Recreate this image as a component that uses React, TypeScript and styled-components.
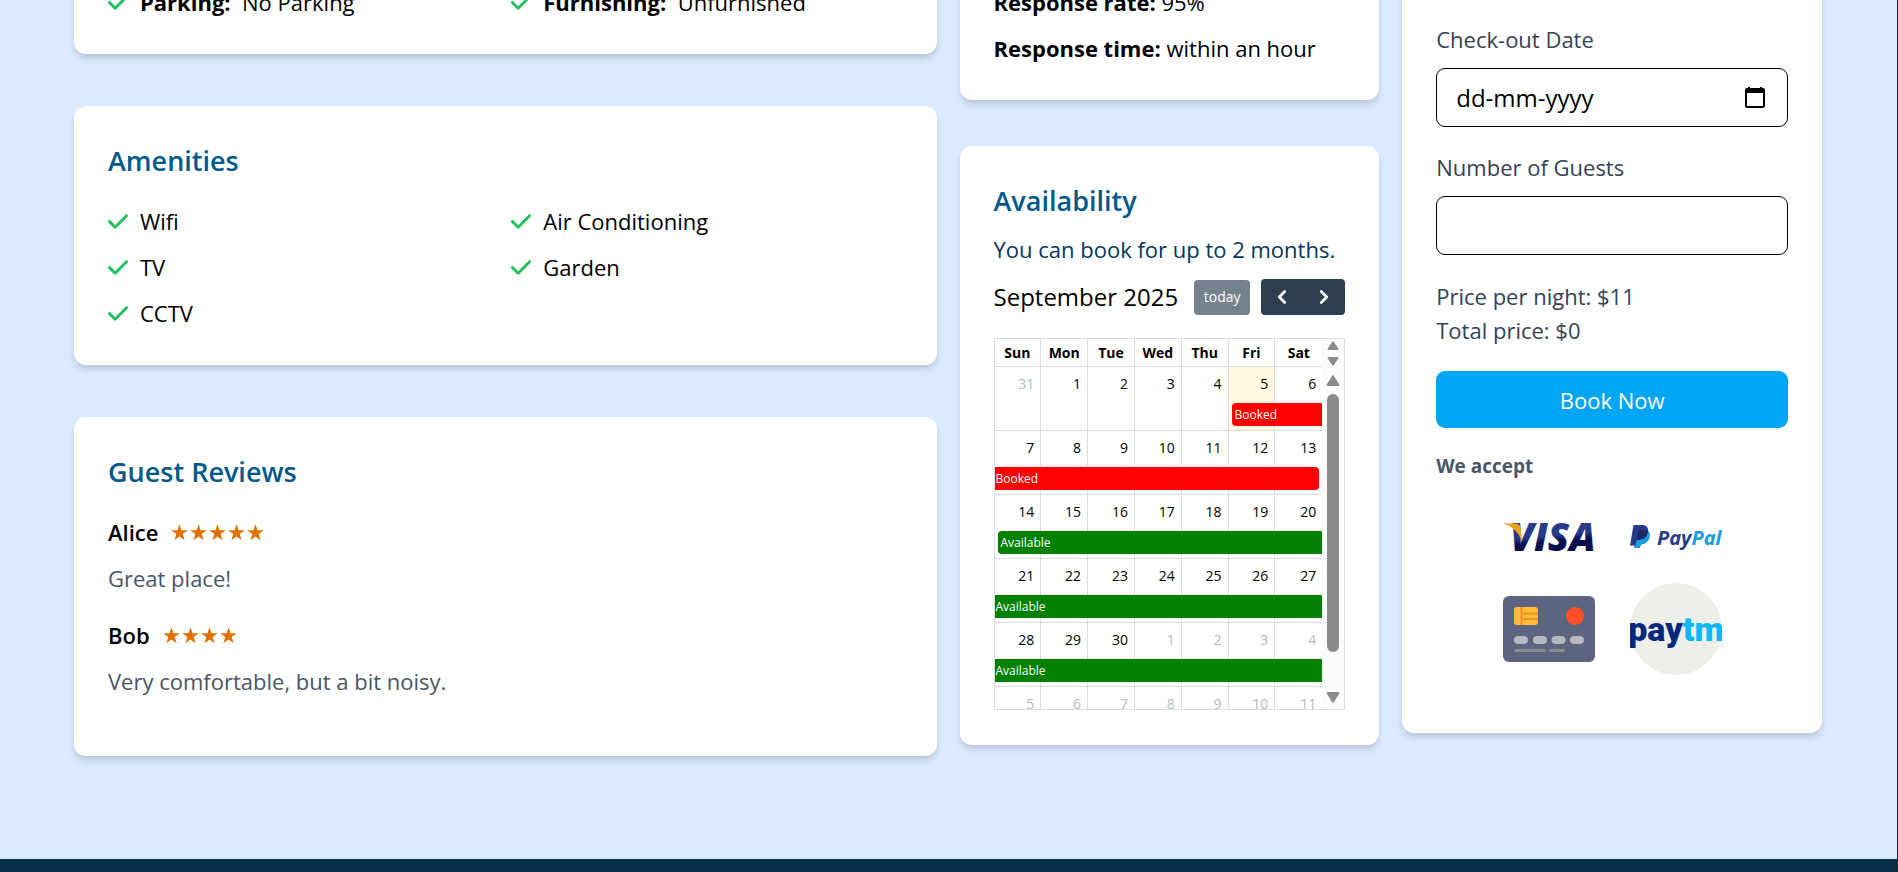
import React from 'react';
import styled, { createGlobalStyle, css } from 'styled-components';
import { FaCheck } from 'react-icons/fa6';
import { ChevronLeft, ChevronRight } from 'lucide-react';

const GlobalStyle = createGlobalStyle`
  *, *::before, *::after { box-sizing: border-box; }
  body {
    margin: 0;
    font-family: "Open Sans", "Noto Sans", sans-serif;
    font-size: 22px;
    line-height: 34px;
    color: #000;
  }
  h2, p, ul { margin: 0; padding: 0; }
  button, input { font: inherit; }
`;

const Page = styled.div`
  min-height: 100vh;
  display: flex;
  flex-direction: column;
  overflow: hidden;
  background: #dbeafe;
  border-right: 1px solid #23262b;
`;

/* The top row of cards runs on above the visible part of the page. */
const Main = styled.main`
  display: grid;
  grid-template-columns: repeat(4, minmax(0, 1fr));
  gap: 23px;
  align-items: start;
  margin-top: -50px;
  padding: 0 75px 103px 74px;
`;

const Column = styled.div<{ $span?: number; $gap: number }>`
  grid-column: span ${(p) => p.$span ?? 1};
  display: flex;
  flex-direction: column;
  gap: ${(p) => p.$gap}px;
`;

const Card = styled.section<{ $top?: number }>`
  padding: ${(p) => p.$top ?? 35}px 34px 35px;
  border-radius: 12px;
  background: #fff;
  box-shadow: 0 6px 9px -1px rgba(0, 0, 0, 0.1), 0 3px 6px -2px rgba(0, 0, 0, 0.1);
`;

const Heading = styled.h2<{ $gap?: number }>`
  margin-bottom: ${(p) => p.$gap ?? 23}px;
  font-size: 27px;
  line-height: 40px;
  font-weight: 600;
  color: #00598a;
`;

const CheckGrid = styled.ul`
  display: grid;
  grid-template-columns: 1fr 1fr;
  gap: 12px;
  list-style: none;
`;

const CheckItem = styled.li`
  display: flex;
  align-items: center;
  gap: 12px;
  svg { width: 20px; height: 23px; color: #1fbf5a; }
`;

const FactList = styled.div`
  display: grid;
  gap: 12px;
`;

const Review = styled.article`
  display: grid;
  gap: 12px;
  margin-bottom: 23px;
`;

const Reviewer = styled.div`
  display: flex;
  align-items: center;
  gap: 12px;
  font-weight: 600;
`;

const Stars = styled.span`
  display: flex;
  color: #e17100;
  svg { width: 19px; height: 19px; }
`;

const Comment = styled.p`
  color: #4a5565;
`;

const Note = styled.p`
  color: #05365a;
`;

const Toolbar = styled.div`
  display: flex;
  align-items: center;
  gap: 11px;
  margin: 13px 0 23px;
`;

const Month = styled.span`
  flex: 1;
  font-size: 24px;
  line-height: 36px;
  white-space: nowrap;
`;

const TodayButton = styled.button`
  width: 56px;
  height: 35px;
  padding: 0;
  border: 0;
  border-radius: 4px;
  background: #75818d;
  color: #fff;
  font-size: 14px;
  line-height: 20px;
`;

const NavGroup = styled.div`
  display: flex;
  border-radius: 4px;
  overflow: hidden;
`;

const NavButton = styled.button`
  display: flex;
  align-items: center;
  justify-content: center;
  width: 42px;
  height: 36px;
  padding: 0;
  border: 0;
  background: #2c3e50;
  color: #fff;
`;

const Calendar = styled.div`
  display: flex;
  height: 372px;
  border: 1px solid #ddd;
  overflow: hidden;
`;

const TableArea = styled.div`
  flex: 1;
  min-width: 0;
`;

const MonthTable = styled.table`
  width: 100%;
  table-layout: fixed;
  border-collapse: separate;
  border-spacing: 0;
  font-size: 14px;
  line-height: 20px;
  th, td {
    border: solid #ddd;
    border-width: 0 1px 1px 0;
    padding: 0;
  }
  th:last-child, td:last-child { border-right: 0; }
  th { height: 28px; font-weight: 700; }
`;

const Day = styled.td<{ $muted?: boolean; $today?: boolean }>`
  position: relative;
  height: 64px;
  text-align: right;
  vertical-align: top;
  color: ${(p) => (p.$muted ? '#b5b9c1' : '#000')};
  background: ${(p) => (p.$today ? '#fffadf' : 'transparent')};
`;

const DayNumber = styled.div`
  padding: 7px 6px 0 0;
`;

const EventBar = styled.div<{ $days: number; $kind: string; $start: boolean; $end: boolean }>`
  position: absolute;
  z-index: 1;
  top: 36px;
  left: ${(p) => (p.$start ? 3 : 0)}px;
  width: calc(${(p) => p.$days * 100}% + ${(p) => p.$days}px - ${(p) => (p.$start ? 3 : 0) + (p.$end ? 3 : 0)}px);
  height: 23px;
  padding-left: ${(p) => (p.$start ? 3 : 1)}px;
  background: ${(p) => (p.$kind === 'Booked' ? '#f00' : '#008000')};
  color: #fff;
  font-size: 12px;
  line-height: 23px;
  text-align: left;
  ${(p) => p.$start && css`border-top-left-radius: 4px; border-bottom-left-radius: 4px;`}
  ${(p) => p.$end && css`border-top-right-radius: 4px; border-bottom-right-radius: 4px;`}
`;

const Gutter = styled.div`
  position: relative;
  z-index: 2;
  display: flex;
  flex-direction: column;
  align-items: center;
  width: 22px;
  background: #fcfcfc;
  color: #8b8b8d;
  svg { display: block; }
`;

const GutterHead = styled.div`
  display: flex;
  flex-direction: column;
  justify-content: space-between;
  height: 28px;
  padding: 2px 0 1px;
`;

const GutterBody = styled.div`
  flex: 1;
  display: flex;
  flex-direction: column;
  align-items: center;
  gap: 8px;
  padding: 8px 0 6px;
`;

const Track = styled.div`
  flex: 1;
  width: 12px;
`;

const Thumb = styled.div`
  height: 89%;
  border-radius: 6px;
  background: #8b8b8d;
`;

const BookingForm = styled.form`
  display: grid;
  grid-template-columns: minmax(0, 1fr);
  gap: 23px;
`;

const Field = styled.label`
  display: grid;
  grid-template-columns: minmax(0, 1fr);
  gap: 12px;
  color: #364153;
`;

const InputBox = styled.span`
  display: flex;
  align-items: center;
  height: 59px;
  padding: 0 22px 0 19px;
  border: 1px solid #000;
  border-radius: 9px;
  background: #fff;
`;

const Input = styled.input`
  flex: 1;
  min-width: 0;
  padding: 0;
  border: 0;
  outline: 0;
  background: transparent;
  color: #000;
  font-size: 24px;
  &::placeholder { color: #000; opacity: 1; }
`;

const Prices = styled.div`
  padding: 1px 0;
  color: #364153;
`;

const BookButton = styled.button`
  height: 57px;
  border: 0;
  border-radius: 9px;
  background: #00a6f4;
  color: #fff;
`;

const Accept = styled.p`
  margin-top: 23px;
  font-size: 19px;
  line-height: 30px;
  font-weight: 700;
  color: #4a5565;
`;

const Payments = styled.div`
  display: grid;
  grid-template-columns: 92px 92px;
  justify-content: center;
  column-gap: 35px;
  padding: 10px 0 23px;
  svg { display: block; width: 92px; height: 92px; }
`;

const Footer = styled.footer`
  flex: 1;
  min-height: 13px;
  background: #052f4a;
`;

const Triangle = ({ down, size = 14 }: { down?: boolean; size?: number }) => (
  <svg width={size} height={size === 14 ? 11 : 9} viewBox="0 0 14 11" preserveAspectRatio="none" aria-hidden="true">
    <path
      d={down ? 'M1.6 1H12.4L7 9.6Z' : 'M1.6 10H12.4L7 1.4Z'}
      fill="currentColor"
      stroke="currentColor"
      strokeWidth="2"
      strokeLinejoin="round"
    />
  </svg>
);

const Star = () => (
  <svg viewBox="0 0 19 19" aria-hidden="true">
    <path fill="currentColor" d="M9.5 1.2 11.5 7.3H17.8L12.7 11.1 14.6 17.2 9.5 13.4 4.4 17.2 6.3 11.1 1.2 7.3H7.5Z" />
  </svg>
);

const VisaLogo = () => (
  <svg viewBox="0 0 92 92" role="img" aria-label="Visa">
    <defs>
      <linearGradient id="visa" x1="0" y1="0" x2="0.15" y2="1">
        <stop offset="0.55" stopColor="#273b88" />
        <stop offset="0.68" stopColor="#070f4c" />
      </linearGradient>
    </defs>
    <text x="7" y="60" fontFamily="Open Sans" fontSize="39" fontWeight="800" fontStyle="italic" fill="url(#visa)">VISA</text>
    <path d="M0 32.500H13Q17 33 17.500 37L19 50Q13 36 0 32.500Z" fill="#f0a01f" />
  </svg>
);

const PaypalLogo = () => (
  <svg viewBox="0 0 92 92" role="img" aria-label="PayPal">
    <path d="M6 39H16Q20.500 40 19.500 46Q18 53 11 53.500L9.500 57H4Z" fill="#1a9be6" />
    <path d="M3.500 34H13Q19 35 18 41Q17 49 9 49H7L5.500 54.500H0Z" fill="#273b88" />
    <path d="M8.500 39H18Q18 48 9 49H7Z" fill="#1b2a62" />
    <path d="M18.200 40Q20.500 42 19.500 46Q18 53 11 53.500L9.500 57H5L7 49H9Q17 49 18.200 40Z" fill="#1a9be6" />
    <text x="27" y="54" fontFamily="Open Sans" fontSize="20" fontWeight="700" fontStyle="italic" fill="#273b88">
      Pay<tspan fill="#1a9be6">Pal</tspan>
    </text>
  </svg>
);

const CardLogo = () => (
  <svg viewBox="0 0 92 92" role="img" aria-label="Credit card">
    <rect y="13" width="92" height="66" rx="6" fill="#5d647f" />
    <rect x="11" y="24" width="24" height="18" rx="3" fill="#ffbc36" />
    <path d="M18.500 24V42M20 30.500H35M20 36H35" stroke="#e8942a" strokeWidth="2" />
    <circle cx="72" cy="33" r="9" fill="#ff5028" />
    {[11, 30, 48.500, 67].map((x) => (
      <rect key={x} x={x} y="53" width="14" height="8" rx="4" fill="#b4b6c1" />
    ))}
    <rect x="11" y="66" width="32" height="3" rx="1.500" fill="#8b8b90" />
    <rect x="46" y="66" width="16" height="3" rx="1.500" fill="#8b8b90" />
  </svg>
);

const PaytmLogo = () => (
  <svg viewBox="0 0 92 92" role="img" aria-label="Paytm">
    <circle cx="46" cy="46" r="46" fill="#efefea" />
    <text x="46" y="58" textAnchor="middle" fontFamily="Roboto" fontSize="34" fontWeight="900" fill="#04297a">
      pay<tspan fill="#06b8f5">tm</tspan>
    </text>
  </svg>
);

type CalEvent = { from: number; days: number; kind: string; start?: boolean; end?: boolean };

const weeks: { days: number[]; event?: CalEvent }[] = [
  { days: [31, 1, 2, 3, 4, 5, 6], event: { from: 5, days: 2, kind: 'Booked', start: true } },
  { days: [7, 8, 9, 10, 11, 12, 13], event: { from: 0, days: 7, kind: 'Booked', end: true } },
  { days: [14, 15, 16, 17, 18, 19, 20], event: { from: 0, days: 7, kind: 'Available', start: true } },
  { days: [21, 22, 23, 24, 25, 26, 27], event: { from: 0, days: 7, kind: 'Available' } },
  { days: [28, 29, 30, 1, 2, 3, 4], event: { from: 0, days: 7, kind: 'Available' } },
  { days: [5, 6, 7, 8, 9, 10, 11] },
];

const isMuted = (week: number, day: number) =>
  (week === 0 && day > 20) || (week === 4 && day < 20) || week === 5;

const reviews = [
  { name: 'Alice', stars: 5, text: 'Great place!' },
  { name: 'Bob', stars: 4, text: 'Very comfortable, but a bit noisy.' },
];

export default function App() {
  return (
    <>
      <GlobalStyle />
      <Page>
        <Main>
          <Column $span={2} $gap={52}>
            <Card>
              <CheckGrid>
                <CheckItem><FaCheck /><span><b>Parking:</b>&nbsp; No Parking</span></CheckItem>
                <CheckItem><FaCheck /><span><b>Furnishing:</b>&nbsp; Unfurnished</span></CheckItem>
              </CheckGrid>
            </Card>
            <Card>
              <Heading>Amenities</Heading>
              <CheckGrid>
                {['Wifi', 'Air Conditioning', 'TV', 'Garden', 'CCTV'].map((name) => (
                  <CheckItem key={name}><FaCheck />{name}</CheckItem>
                ))}
              </CheckGrid>
            </Card>
            <Card>
              <Heading>Guest Reviews</Heading>
              {reviews.map((r) => (
                <Review key={r.name}>
                  <Reviewer>
                    {r.name}
                    <Stars role="img" aria-label={`${r.stars} stars`}>
                      {Array.from({ length: r.stars }, (_, i) => <Star key={i} />)}
                    </Stars>
                  </Reviewer>
                  <Comment>{r.text}</Comment>
                </Review>
              ))}
            </Card>
          </Column>

          <Column $gap={46}>
            <Card>
              <FactList>
                <p><b>Response rate:</b> 95%</p>
                <p><b>Response time:</b> within an hour</p>
              </FactList>
            </Card>
            <Card>
              <Heading $gap={11}>Availability</Heading>
              <Note>You can book for up to 2 months.</Note>
              <Toolbar>
                <Month>September 2025</Month>
                <TodayButton type="button">today</TodayButton>
                <NavGroup>
                  <NavButton type="button" aria-label="Previous month"><ChevronLeft size={22} strokeWidth={3} /></NavButton>
                  <NavButton type="button" aria-label="Next month"><ChevronRight size={22} strokeWidth={3} /></NavButton>
                </NavGroup>
              </Toolbar>
              <Calendar>
                <TableArea>
                  <MonthTable>
                    <thead>
                      <tr>
                        {['Sun', 'Mon', 'Tue', 'Wed', 'Thu', 'Fri', 'Sat'].map((d) => <th key={d} scope="col">{d}</th>)}
                      </tr>
                    </thead>
                    <tbody>
                      {weeks.map((week, w) => (
                        <tr key={w}>
                          {week.days.map((day, d) => (
                            <Day key={d} $muted={isMuted(w, day)} $today={w === 0 && day === 5}>
                              <DayNumber>{day}</DayNumber>
                              {week.event && week.event.from === d && (
                                <EventBar
                                  $days={week.event.days}
                                  $kind={week.event.kind}
                                  $start={!!week.event.start}
                                  $end={!!week.event.end}
                                >
                                  {week.event.kind}
                                </EventBar>
                              )}
                            </Day>
                          ))}
                        </tr>
                      ))}
                    </tbody>
                  </MonthTable>
                </TableArea>
                <Gutter aria-hidden="true">
                  <GutterHead><Triangle size={12} /><Triangle size={12} down /></GutterHead>
                  <GutterBody>
                    <Triangle />
                    <Track><Thumb /></Track>
                    <Triangle down />
                  </GutterBody>
                </Gutter>
              </Calendar>
            </Card>
          </Column>

          <Column $gap={46}>
            <Card $top={72}>
              <BookingForm onSubmit={(e) => e.preventDefault()}>
                <Field>
                  Check-out Date
                  <InputBox>
                    <Input type="text" placeholder="dd-mm-yyyy" />
                    <svg width="20" height="22" viewBox="0 0 20 22" aria-hidden="true">
                      <path d="M4 0V3M16 0V3" stroke="#000" strokeWidth="2" />
                      <rect x="1" y="2" width="18" height="18" rx="1" fill="none" stroke="#000" strokeWidth="2" />
                      <path d="M1 2H19V6H1Z" fill="#000" />
                    </svg>
                  </InputBox>
                </Field>
                <Field>
                  Number of Guests
                  <InputBox><Input type="text" inputMode="numeric" /></InputBox>
                </Field>
                <Prices>
                  <p>Price per night: $11</p>
                  <p>Total price: $0</p>
                </Prices>
                <BookButton type="submit">Book Now</BookButton>
              </BookingForm>
              <Accept>We accept</Accept>
              <Payments>
                <VisaLogo />
                <PaypalLogo />
                <CardLogo />
                <PaytmLogo />
              </Payments>
            </Card>
          </Column>
        </Main>
        <Footer />
      </Page>
    </>
  );
}
